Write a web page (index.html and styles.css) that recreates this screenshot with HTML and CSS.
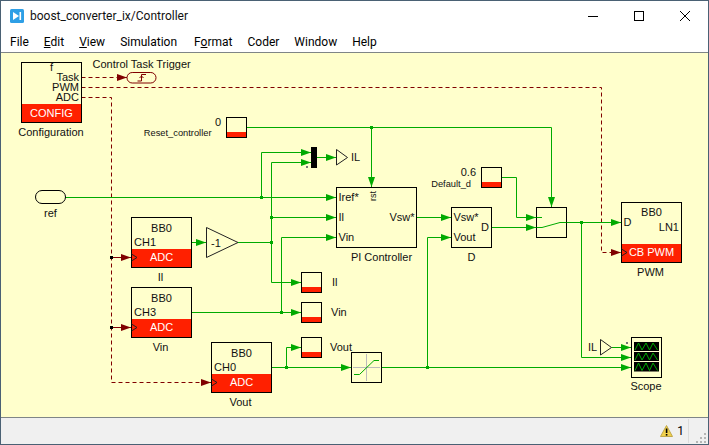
FILE: index.html
```html
<!DOCTYPE html>
<html lang="en">
<head>
<meta charset="utf-8">
<title>boost_converter_ix/Controller</title>
<link rel="stylesheet" href="styles.css">
</head>
<body>
<div class="window">
  <header class="titlebar">
    <svg class="app-icon" width="14" height="14" viewBox="0 0 14 14"><rect width="14" height="14" rx="1.5" fill="#2e9fe6"/><path d="M3 3 L9 7 L3 11 Z" fill="#fff"/><rect x="9.5" y="3" width="1.6" height="8" fill="#fff"/></svg>
    <span class="title">boost_converter_ix/Controller</span>
    <div class="win-controls">
      <svg class="win-btn" width="46" height="30" viewBox="0 0 46 30"><path d="M18 15.5 H28" stroke="#000" fill="none"/></svg>
      <svg class="win-btn" width="46" height="30" viewBox="0 0 46 30"><rect x="18.5" y="10.5" width="9" height="9" stroke="#000" fill="none"/></svg>
      <svg class="win-btn" width="46" height="30" viewBox="0 0 46 30"><path d="M18 10 L28 20 M28 10 L18 20" stroke="#000" fill="none" stroke-width="1"/></svg>
    </div>
  </header>
  <nav class="menubar">
    <span class="menu-item">File</span>
    <span class="menu-item"><u>E</u>dit</span>
    <span class="menu-item"><u>V</u>iew</span>
    <span class="menu-item menu-wide">Simulation</span>
    <span class="menu-item">F<u>o</u>rmat</span>
    <span class="menu-item">Coder</span>
    <span class="menu-item">Window</span>
    <span class="menu-item">Help</span>
  </nav>
  <main class="canvas">
    <svg class="diagram" width="707" height="364" viewBox="1 53 707 364">
      <defs>
        <marker id="ga" markerUnits="userSpaceOnUse" markerWidth="10" markerHeight="8" refX="10" refY="4" orient="auto"><path d="M0 .5 L10 4 L0 7.5 Z" fill="#00aa00"/></marker>
        <marker id="ra" markerUnits="userSpaceOnUse" markerWidth="10" markerHeight="8" refX="10" refY="4" orient="auto"><path d="M0 .5 L10 4 L0 7.5 Z" fill="#800000"/></marker>
      </defs>

      <!-- dashed control wires -->
      <g class="wire-red">
        <path marker-end="url(#ra)" d="M81.5 77.5 H127"/>
        <path marker-end="url(#ra)" d="M81.5 87.5 H601.5 V252.5 H621"/>
        <path marker-end="url(#ra)" d="M81.5 97.5 H111.5 V382.5 H211"/>
      </g>
      <g class="wire-red-solid">
        <path marker-end="url(#ra)" d="M111.5 257.5 H131"/>
        <path marker-end="url(#ra)" d="M111.5 327.5 H131"/>
      </g>
      <rect class="dot-black" x="110" y="256" width="3" height="3"/>
      <rect class="dot-black" x="110" y="326" width="3" height="3"/>

      <!-- signal wires -->
      <g class="wire">
        <path marker-end="url(#ga)" d="M65 197.5 H336"/>
        <path marker-end="url(#ga)" d="M261.5 197.5 V152.5 H311"/>
        <path marker-end="url(#ga)" d="M271.5 242.5 V162.5 H311"/>
        <path marker-end="url(#ga)" d="M271.5 217.5 H336"/>
        <path marker-end="url(#ga)" d="M271.5 242.5 V282.5 H301"/>
        <path marker-end="url(#ga)" d="M317 157.5 H336"/>
        <path marker-end="url(#ga)" d="M246.5 127.5 H551.5 V207"/>
        <path marker-end="url(#ga)" d="M371.5 127.5 V187"/>
        <path marker-end="url(#ga)" d="M191.5 242.5 H206"/>
        <path d="M238 242.5 H271.5"/>
        <path marker-end="url(#ga)" d="M191.5 312.5 H301"/>
        <path marker-end="url(#ga)" d="M281.5 312.5 V237.5 H336"/>
        <path marker-end="url(#ga)" d="M271.5 367.5 H351"/>
        <path marker-end="url(#ga)" d="M286.5 367.5 V347.5 H301"/>
        <path marker-end="url(#ga)" d="M381.5 367.5 H631"/>
        <path marker-end="url(#ga)" d="M427.5 367.5 V237.5 H451"/>
        <path marker-end="url(#ga)" d="M416.5 217.5 H451"/>
        <path marker-end="url(#ga)" d="M501.5 177.5 H516.5 V217.5 H536"/>
        <path marker-end="url(#ga)" d="M491.5 227.5 H536"/>
        <path marker-end="url(#ga)" d="M566.5 222.5 H621"/>
        <path marker-end="url(#ga)" d="M581.5 222.5 V357.5 H631"/>
        <path marker-end="url(#ga)" d="M611.5 347.5 H631"/>
      </g>
      <g class="dot-green">
        <rect x="260" y="196" width="3" height="3"/>
        <rect x="270" y="216" width="3" height="3"/>
        <rect x="270" y="241" width="3" height="3"/>
        <rect x="370" y="126" width="3" height="3"/>
        <rect x="280" y="311" width="3" height="3"/>
        <rect x="285" y="366" width="3" height="3"/>
        <rect x="426" y="366" width="3" height="3"/>
        <rect x="580" y="221" width="3" height="3"/>
      </g>

      <!-- Configuration -->
      <rect class="red" x="21.5" y="104" width="60" height="18"/>
      <rect class="box" x="21.5" y="62.5" width="60" height="60"/>
      <text class="t mid" x="51.5" y="71">f</text>
      <text class="t end" x="79" y="81">Task</text>
      <text class="t end" x="79" y="91">PWM</text>
      <text class="t end" x="79" y="101">ADC</text>
      <text class="t mid white" x="51.5" y="117">CONFIG</text>
      <text class="t mid" x="51" y="136">Configuration</text>

      <!-- Trigger -->
      <rect class="pill-red" x="127" y="72.5" width="29" height="10.5" rx="5.2"/>
      <path class="edge" d="M137.5 81 H141.5 V74.5 H146 M139.5 78 L141.5 76 L143.5 78"/>
      <text class="t" x="92.5" y="68">Control Task Trigger</text>

      <!-- Reset -->
      <rect class="red" x="226.5" y="132" width="20" height="5"/>
      <rect class="box" x="226.5" y="117.5" width="20" height="20"/>
      <text class="t end" x="221" y="126">0</text>
      <text class="t small end" x="211.5" y="136">Reset_controller</text>

      <!-- ref -->
      <rect class="pill" x="35.5" y="190.5" width="30" height="13" rx="6.5"/>
      <text class="t mid" x="50.5" y="217">ref</text>

      <!-- Mux and IL goto -->
      <rect class="fill-black" x="311" y="147" width="6" height="21"/>
      <rect class="fill-grey" x="306" y="166" width="2" height="2"/>
      <path class="tri" d="M336.5 149.5 V165 L347.5 157.5 Z"/>
      <text class="t" x="351" y="161">IL</text>

      <!-- PI Controller -->
      <rect class="box-open" x="336.5" y="187.5" width="80" height="60"/>
      <text class="t" x="338.5" y="201">Iref*</text>
      <text class="t" x="338.5" y="221">Il</text>
      <text class="t" x="338.5" y="241">Vin</text>
      <text class="t end" x="414.5" y="221">Vsw*</text>
      <text class="t tiny mid" transform="translate(375.5 196) rotate(-90)">rst</text>
      <text class="t mid" x="381.5" y="261">PI Controller</text>

      <!-- D -->
      <rect class="box-open" x="451.5" y="207.5" width="40" height="40"/>
      <text class="t" x="453.5" y="221">Vsw*</text>
      <text class="t" x="453.5" y="241">Vout</text>
      <text class="t end" x="489" y="231">D</text>
      <text class="t mid" x="471.5" y="261">D</text>

      <!-- Default_d -->
      <rect class="red" x="481.5" y="182" width="20" height="5"/>
      <rect class="box" x="481.5" y="167.5" width="20" height="20"/>
      <text class="t end" x="476" y="176">0.6</text>
      <text class="t small end" x="471" y="187">Default_d</text>

      <!-- Switch -->
      <rect class="box-open" x="536.5" y="207.5" width="30" height="30"/>
      <path class="wire-plain" d="M536.5 217.5 H542 M536.5 227.5 H542 L560 222.5 H566.5"/>

      <!-- PWM -->
      <rect class="red" x="621.5" y="244" width="60" height="18"/>
      <rect class="box" x="621.5" y="202.5" width="60" height="60"/>
      <text class="t mid" x="651.5" y="216">BB0</text>
      <text class="t" x="623.5" y="226">D</text>
      <text class="t end" x="679" y="231">LN1</text>
      <text class="t mid white" x="651.5" y="256">CB PWM</text>
      <path class="port" d="M621.5 249 L627 252.5 L621.5 256"/>
      <text class="t mid" x="650.5" y="276">PWM</text>

      <!-- ADC Il -->
      <rect class="red" x="131.5" y="249" width="60" height="18"/>
      <rect class="box" x="131.5" y="217.5" width="60" height="50"/>
      <text class="t mid" x="161.5" y="232">BB0</text>
      <text class="t" x="134" y="246">CH1</text>
      <text class="t mid white" x="161.5" y="261">ADC</text>
      <path class="port" d="M131.5 254 L137 257.5 L131.5 261"/>
      <text class="t mid" x="160.5" y="281">Il</text>

      <!-- ADC Vin -->
      <rect class="red" x="131.5" y="319" width="60" height="18"/>
      <rect class="box" x="131.5" y="287.5" width="60" height="50"/>
      <text class="t mid" x="161.5" y="302">BB0</text>
      <text class="t" x="134" y="316">CH3</text>
      <text class="t mid white" x="161.5" y="331">ADC</text>
      <path class="port" d="M131.5 324 L137 327.5 L131.5 331"/>
      <text class="t mid" x="160.5" y="351">Vin</text>

      <!-- ADC Vout -->
      <rect class="red" x="211.5" y="374" width="60" height="18"/>
      <rect class="box" x="211.5" y="342.5" width="60" height="50"/>
      <text class="t mid" x="241.5" y="357">BB0</text>
      <text class="t" x="214" y="371">CH0</text>
      <text class="t mid white" x="241.5" y="386">ADC</text>
      <path class="port" d="M211.5 379 L217 382.5 L211.5 386"/>
      <text class="t mid" x="240.5" y="406">Vout</text>

      <!-- Gain -->
      <path class="tri" d="M206.5 227.5 V257.5 L238 242.5 Z"/>
      <text class="t" x="211" y="247">-1</text>

      <!-- Displays -->
      <rect class="red" x="301.5" y="287" width="20" height="5"/>
      <rect class="box" x="301.5" y="272.5" width="20" height="20"/>
      <text class="t" x="332" y="286">Il</text>
      <rect class="red" x="301.5" y="317" width="20" height="5"/>
      <rect class="box" x="301.5" y="302.5" width="20" height="20"/>
      <text class="t" x="331" y="316">Vin</text>
      <rect class="red" x="301.5" y="352" width="20" height="5"/>
      <rect class="box" x="301.5" y="337.5" width="20" height="20"/>
      <text class="t" x="330" y="351">Vout</text>

      <!-- Saturation -->
      <rect class="box-open" x="351.5" y="352.5" width="30" height="30"/>
      <path class="axes" d="M366.5 354 V381 M353 367.5 H380"/>
      <path class="wire-plain" d="M354 374.5 H359.5 L374 360.5 H379"/>

      <!-- Scope -->
      <rect class="box" x="631.5" y="337.5" width="30" height="40"/>
      <g class="scope-panel">
        <rect x="634" y="342" width="25" height="9"/>
        <rect x="634" y="352" width="25" height="9"/>
        <rect x="634" y="362" width="25" height="9.5"/>
      </g>
      <g class="scope-trace">
        <path d="M635 350 L638.5 343 L642 350 L646 343 L649.5 350 L653 343 L657.5 350"/>
        <path d="M635 360 L638.5 353 L642 360 L646 353 L649.5 360 L653 353 L657.5 360"/>
        <path d="M635 370.5 L638.5 363 L642 370.5 L646 363 L649.5 370.5 L653 363 L657.5 370.5"/>
      </g>
      <rect class="fill-grey" x="626" y="342" width="2" height="2"/>
      <path class="tri" d="M600.5 339.5 V355 L611.5 347.5 Z"/>
      <text class="t" x="588" y="351">IL</text>
      <text class="t mid" x="646" y="390">Scope</text>
    </svg>
  </main>
  <footer class="statusbar">
    <svg class="warn" width="13" height="12" viewBox="0 0 13 12"><path d="M6.5 .5 L12.5 11.5 H.5 Z" fill="#f1d14b" stroke="#c0a84a"/><rect x="5.8" y="3.5" width="1.6" height="4.5" fill="#000"/><rect x="5.8" y="9" width="1.6" height="1.6" fill="#000"/></svg>
    <span class="warn-count">1</span>
    <span class="status-sep"></span>
    <svg class="grip" width="11" height="11" viewBox="0 0 11 11"><g fill="#b5b5b5"><rect x="8" y="0" width="2" height="2"/><rect x="4" y="4" width="2" height="2"/><rect x="8" y="4" width="2" height="2"/><rect x="0" y="8" width="2" height="2"/><rect x="4" y="8" width="2" height="2"/><rect x="8" y="8" width="2" height="2"/></g></svg>
  </footer>
</div>
</body>
</html>
```

FILE: styles.css
```css
html, body {
  margin: 0;
  padding: 0;
  background: #fff;
}

.window {
  box-sizing: border-box;
  width: 709px;
  height: 445px;
  border: 1px solid #4a6174;
  display: flex;
  flex-direction: column;
  font-family: Roboto, "Noto Sans", sans-serif;
  color: #000;
  overflow: hidden;
}

.titlebar {
  height: 29px;
  flex: none;
  display: flex;
  align-items: center;
  padding-left: 9px;
  background: #fff;
}

.app-icon {
  margin-right: 6px;
}

.title {
  font-size: 12px;
  color: #111;
}

.win-controls {
  margin-left: auto;
  display: flex;
}

.win-btn {
  display: block;
}

.menubar {
  box-sizing: border-box;
  height: 22px;
  flex: none;
  display: flex;
  align-items: center;
  gap: 15px;
  background: #fff;
  font-size: 12px;
  padding: 1px 0 0 9px;
}

.menu-wide {
  padding-right: 2px;
}

.canvas {
  flex: 1;
  min-height: 0;
  background: #ffffcc;
  border-top: 1px solid #7f8587;
  border-bottom: 1px solid #7f8587;
}

.diagram {
  display: block;
}

.statusbar {
  height: 26px;
  flex: none;
  display: flex;
  align-items: center;
  background: #f0f0f0;
  font-size: 12px;
}

.warn {
  margin-left: auto;
  margin-right: 4px;
}

.warn-count {
  margin-right: 4px;
}

.status-sep {
  width: 1px;
  height: 24px;
  background: #dcdcdc;
  margin-right: 7px;
}

.grip {
  margin-right: 1px;
  align-self: flex-end;
}

/* diagram parts */
.t {
  font-family: "Liberation Sans", Arial, sans-serif;
  font-size: 11px;
  fill: #111;
}
.small { font-size: 9.3px; }
.tiny { font-size: 9px; }
.mid { text-anchor: middle; }
.end { text-anchor: end; }
.white { fill: #fff; }

.box, .box-open, .pill {
  fill: none;
  stroke: #000;
  stroke-width: 1;
}
.pill-red {
  fill: none;
  stroke: #800000;
}
.red { fill: #ff2000; }

.wire path, .wire-plain {
  fill: none;
  stroke: #00aa00;
  stroke-width: 1;
}
.dot-green rect { fill: #00aa00; }
.dot-black { fill: #000; }

.wire-red path {
  fill: none;
  stroke: #800000;
  stroke-dasharray: 4 3;
}
.wire-red-solid path {
  fill: none;
  stroke: #800000;
}

.tri {
  fill: none;
  stroke: #222;
}
.port {
  fill: none;
  stroke: #222;
}
.edge {
  fill: none;
  stroke: #800000;
}
.axes {
  fill: none;
  stroke: #bbb;
}
.fill-black { fill: #000; }
.fill-grey { fill: #777; }
.scope-panel rect { fill: #000; }
.scope-trace path {
  fill: none;
  stroke: #00aa00;
}
```
